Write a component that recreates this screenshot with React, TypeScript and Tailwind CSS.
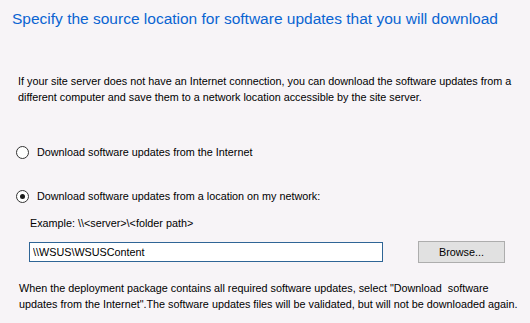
import { useState } from "react";

export default function App() {
  const [source, setSource] = useState<"internet" | "network">("network");
  const [path, setPath] = useState("\\\\WSUS\\WSUSContent");

  return (
    <div
      className="w-[530px] h-[323px] overflow-hidden bg-[#f7f4f7] text-black"
      style={{ fontFamily: '"Liberation Sans", Arial, sans-serif' }}
    >
      <h1 className="pl-[12px] pt-[9px] text-[15.5px] leading-[20px] text-[#0a64d2]">
        Specify the source location for software updates that you will download
      </h1>

      <p className="mt-[44px] pl-[18px] text-[10.8px] leading-[16px] whitespace-nowrap">
        If your site server does not have an Internet connection, you can download the software updates from a
        <br />
        different computer and save them to a network location accessible by the site server.
      </p>

      <div className="mt-[38px] pl-[16px] flex flex-col gap-[28px] text-[10.8px]">
        <label className="flex items-center gap-[8px] h-[16px] mt-[1px]">
          <Radio checked={source === "internet"} onClick={() => setSource("internet")} />
          <span>Download software updates from the Internet</span>
        </label>
        <label className="flex items-center gap-[8px] h-[16px]">
          <Radio checked={source === "network"} onClick={() => setSource("network")} />
          <span>Download software updates from a location on my network:</span>
        </label>
      </div>

      <div className="mt-[11px] pl-[30px] text-[10.8px] leading-[16px]">Example: \\&lt;server&gt;\&lt;folder path&gt;</div>

      <div className="mt-[10px] pl-[29px] flex items-center">
        <input
          value={path}
          onChange={(e) => setPath(e.target.value)}
          className="w-[354px] h-[20px] border border-[#2f6596] bg-white px-[3px] text-[10.8px] outline-none"
        />
        <button className="ml-[35px] w-[87px] h-[22px] border border-[#adadad] bg-[#e1e1e1] text-[10.8px]">
          Browse...
        </button>
      </div>

      <p className="mt-[17px] pl-[19px] text-[10.8px] leading-[16px] whitespace-nowrap">
        When the deployment package contains all required software updates, select "Download&nbsp; software
        <br />
        updates from the Internet".The software updates files will be validated, but will not be downloaded again.
      </p>
    </div>
  );
}

function Radio({ checked, onClick }: { checked: boolean; onClick: () => void }) {
  return (
    <span
      onClick={onClick}
      className="w-[13px] h-[13px] rounded-full border border-[#333] bg-white flex items-center justify-center shrink-0"
    >
      {checked && <span className="w-[5px] h-[5px] rounded-full bg-[#1a1a1a]" />}
    </span>
  );
}
